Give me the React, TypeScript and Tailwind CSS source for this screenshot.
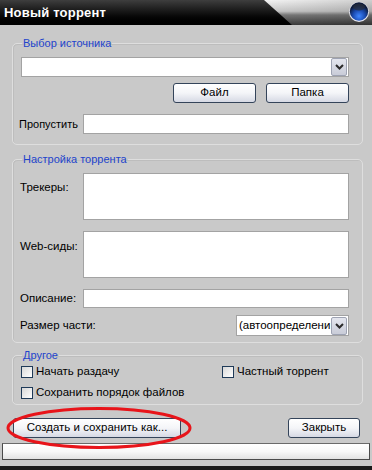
import React from "react";

const font = { fontFamily: '"Liberation Sans", Arial, sans-serif' };

function Chevron() {
  return (
    <svg width="9" height="6" viewBox="0 0 9 6">
      <path d="M1 1 L4.5 4.5 L8 1" fill="none" stroke="#2a2a2a" strokeWidth="2" />
    </svg>
  );
}

function DropBtn() {
  return (
    <div className="w-[16px] h-[18px] shrink-0 mr-[1px] flex items-center justify-center bg-gradient-to-b from-[#e4e6ee] to-[#c9ccd8] border border-[#9ea3b3] rounded-[2px]">
      <Chevron />
    </div>
  );
}

function XPButton({ children, className }: { children: React.ReactNode; className?: string }) {
  return (
    <div
      className={
        "h-[20px] flex items-center justify-center rounded-[3px] border border-[#34445a] bg-gradient-to-b from-[#ffffff] via-[#f4f5f8] to-[#d6d9e4] text-[11.5px] text-black " +
        (className ?? "")
      }
    >
      {children}
    </div>
  );
}

function Checkbox({ label }: { label: string }) {
  return (
    <div className="flex items-center h-[12px]">
      <div className="w-[12px] h-[12px] border border-[#1f3a58] bg-gradient-to-br from-[#d8d8d8] to-[#ffffff]" />
      <span className="ml-[3px] text-[11.5px] text-black leading-none">{label}</span>
    </div>
  );
}

function Group({
  title,
  children,
  className,
}: {
  title: string;
  children: React.ReactNode;
  className?: string;
}) {
  return (
    <fieldset
      className={
        "border border-[#dedede] rounded-[5px] shadow-[inset_1px_1px_0_#bdbdbd] pl-[8px] pr-[13px] " + (className ?? "")
      }
    >
      <legend className="ml-[1px] px-[1px] text-[11px] leading-[13px] text-[#2244cc]">{title}</legend>
      {children}
    </fieldset>
  );
}

export default function App() {
  return (
    <div className="w-[372px] h-[470px] bg-[#c9c9c9] flex flex-col overflow-hidden" style={font}>
      {/* Title bar */}
      <div className="relative h-[25px] flex items-center bg-gradient-to-b from-[#3e3e3e] via-[#141414] to-[#000000]">
        <svg className="absolute inset-0" width="372" height="25" viewBox="0 0 372 25">
          <defs>
            <linearGradient id="gl" x1="0" y1="0" x2="0" y2="1">
              <stop offset="0" stopColor="#f4f4f4" />
              <stop offset="0.45" stopColor="#c8c8c8" />
              <stop offset="0.6" stopColor="#7a7a7a" />
              <stop offset="1" stopColor="#3a3a3a" />
            </linearGradient>
            <linearGradient id="glh" x1="0" y1="0" x2="1" y2="0">
              <stop offset="0" stopColor="#000" stopOpacity="0.0" />
              <stop offset="1" stopColor="#000" stopOpacity="0.15" />
            </linearGradient>
            <radialGradient id="orb" cx="0.5" cy="0.75" r="0.6">
              <stop offset="0" stopColor="#3f86ff" />
              <stop offset="0.55" stopColor="#1a4ab0" />
              <stop offset="1" stopColor="#0c1a3a" />
            </radialGradient>
          </defs>
          <path d="M264 0 L372 0 L372 25 L292 25 Z" fill="url(#gl)" />
          <path d="M264 0 L372 0 L372 25 L292 25 Z" fill="url(#glh)" />
          <circle cx="359" cy="12" r="10" fill="#e8e8f0" />
          <circle cx="359" cy="11.5" r="9.2" fill="url(#orb)" />
          <ellipse cx="359" cy="7" rx="6" ry="3.5" fill="#2a2f3a" opacity="0.7" />
        </svg>
        <span className="relative ml-[4px] text-white font-bold text-[13px] leading-none tracking-[0.2px]">
          Новый торрент
        </span>
      </div>

      <div className="flex flex-col pl-[12px] pr-[9px]">
        {/* Group 1 */}
        <Group title="Выбор источника" className="mt-[12px] pt-[7px] pb-[10px]">
          <div className="h-[20px] bg-white border border-[#a3a3a3] flex items-center justify-end">
            <DropBtn />
          </div>
          <div className="flex justify-end gap-[10px] mt-[6px]">
            <XPButton className="w-[83px]">Файл</XPButton>
            <XPButton className="w-[83px]">Папка</XPButton>
          </div>
          <div className="flex items-center mt-[11px] -ml-[2px]">
            <span className="w-[64px] shrink-0 text-[11px] text-black">Пропустить</span>
            <div className="flex-1 h-[20px] bg-white border border-[#a3a3a3]" />
          </div>
        </Group>

        {/* Group 2 */}
        <Group title="Настройка торрента" className="mt-[8px] pt-[7px] pb-[6px]">
          <div className="flex -ml-[1px]">
            <span className="w-[63px] shrink-0 pt-[6px] text-[11.5px] text-black">Трекеры:</span>
            <div className="flex-1 h-[47px] bg-white border border-[#a3a3a3]" />
          </div>
          <div className="flex mt-[11px] -ml-[1px]">
            <span className="w-[63px] shrink-0 pt-[7px] text-[11.5px] text-black">Web-сиды:</span>
            <div className="flex-1 h-[47px] bg-white border border-[#a3a3a3]" />
          </div>
          <div className="flex items-center mt-[11px] -ml-[1px]">
            <span className="w-[63px] shrink-0 text-[11.5px] text-black">Описание:</span>
            <div className="flex-1 h-[19px] bg-white border border-[#a3a3a3]" />
          </div>
          <div className="flex items-center mt-[7px] -ml-[1px]">
            <span className="flex-1 text-[11.5px] text-black">Размер части:</span>
            <div className="w-[113px] h-[21px] bg-white border border-[#a3a3a3] flex items-center overflow-hidden">
              <span className="flex-1 min-w-0 pl-[2px] text-[11.5px] text-black whitespace-nowrap">
                (автоопределени
              </span>
              <DropBtn />
            </div>
          </div>
        </Group>

        {/* Group 3 */}
        <Group title="Другое" className="mt-[6px] pt-[4px] pb-[5px]">
          <div className="flex">
            <div className="w-[201px]">
              <Checkbox label="Начать раздачу" />
            </div>
            <Checkbox label="Частный торрент" />
          </div>
          <div className="mt-[9px]">
            <Checkbox label="Сохранить порядок файлов" />
          </div>
        </Group>

        {/* Buttons */}
        <div className="relative flex justify-between mt-[13px] ml-[1px] mr-[3px]">
          <XPButton className="w-[168px]">Создать и сохранить как...</XPButton>
          <XPButton className="w-[72px]">Закрыть</XPButton>
          <svg className="absolute left-[-8px] top-[-12px]" width="190" height="46" viewBox="0 0 190 46">
            <ellipse cx="94" cy="22" rx="91" ry="19.5" fill="none" stroke="#e8141a" strokeWidth="3" />
          </svg>
        </div>
      </div>

      {/* progress */}
      <div className="mt-[5px] mx-[2px] h-[17px] border border-[#4a4a4a] border-t-[#6a6a6a] bg-gradient-to-b from-[#ffffff] via-[#f8f8f8] to-[#e2e2e2]" />

      <div className="mt-auto h-[4px] bg-[#1a1a1a]" />
    </div>
  );
}
